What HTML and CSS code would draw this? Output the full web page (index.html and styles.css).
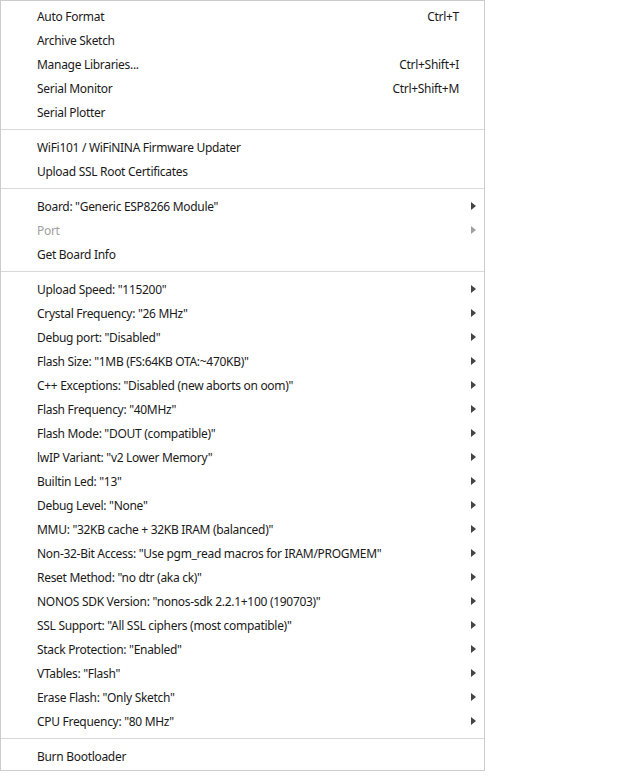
FILE: index.html
```html
<!DOCTYPE html>
<html>
<head>
<meta charset="utf-8">
<link rel="stylesheet" href="styles.css">
</head>
<body>
<div class="menu">
  <div class="item"><span class="label">Auto Format</span><span class="key">Ctrl+T</span></div>
  <div class="item"><span class="label">Archive Sketch</span></div>
  <div class="item"><span class="label">Manage Libraries...</span><span class="key">Ctrl+Shift+I</span></div>
  <div class="item"><span class="label">Serial Monitor</span><span class="key">Ctrl+Shift+M</span></div>
  <div class="item"><span class="label">Serial Plotter</span></div>
  <div class="sep"></div>
  <div class="item"><span class="label">WiFi101 / WiFiNINA Firmware Updater</span></div>
  <div class="item"><span class="label">Upload SSL Root Certificates</span></div>
  <div class="sep"></div>
  <div class="item sub"><span class="label">Board: "Generic ESP8266 Module"</span></div>
  <div class="item sub disabled"><span class="label">Port</span></div>
  <div class="item"><span class="label">Get Board Info</span></div>
  <div class="sep"></div>
  <div class="item sub"><span class="label">Upload Speed: "115200"</span></div>
  <div class="item sub"><span class="label">Crystal Frequency: "26 MHz"</span></div>
  <div class="item sub"><span class="label">Debug port: "Disabled"</span></div>
  <div class="item sub"><span class="label">Flash Size: "1MB (FS:64KB OTA:~470KB)"</span></div>
  <div class="item sub"><span class="label">C++ Exceptions: "Disabled (new aborts on oom)"</span></div>
  <div class="item sub"><span class="label">Flash Frequency: "40MHz"</span></div>
  <div class="item sub"><span class="label">Flash Mode: "DOUT (compatible)"</span></div>
  <div class="item sub"><span class="label">lwIP Variant: "v2 Lower Memory"</span></div>
  <div class="item sub"><span class="label">Builtin Led: "13"</span></div>
  <div class="item sub"><span class="label">Debug Level: "None"</span></div>
  <div class="item sub"><span class="label">MMU: "32KB cache + 32KB IRAM (balanced)"</span></div>
  <div class="item sub"><span class="label">Non-32-Bit Access: "Use pgm_read macros for IRAM/PROGMEM"</span></div>
  <div class="item sub"><span class="label">Reset Method: "no dtr (aka ck)"</span></div>
  <div class="item sub"><span class="label">NONOS SDK Version: "nonos-sdk 2.2.1+100 (190703)"</span></div>
  <div class="item sub"><span class="label">SSL Support: "All SSL ciphers (most compatible)"</span></div>
  <div class="item sub"><span class="label">Stack Protection: "Enabled"</span></div>
  <div class="item sub"><span class="label">VTables: "Flash"</span></div>
  <div class="item sub"><span class="label">Erase Flash: "Only Sketch"</span></div>
  <div class="item sub"><span class="label">CPU Frequency: "80 MHz"</span></div>
  <div class="sep"></div>
  <div class="item"><span class="label">Burn Bootloader</span></div>
</div>
</body>
</html>
```
FILE: styles.css
```css
html, body {
  margin: 0;
  padding: 0;
  background: #ffffff;
}
.menu {
  box-sizing: border-box;
  width: 485px;
  border: 1px solid #cccccc;
  padding: 3px 0 2px 0;
  font-family: "Noto Sans", "Open Sans", sans-serif;
  font-size: 12px;
  letter-spacing: -0.3px;
  color: #1a1a1a;
  background: #ffffff;
}
.item {
  display: flex;
  align-items: center;
  height: 24px;
  padding-left: 36px;
  padding-right: 25px;
  position: relative;
}
.label {
  flex: 1;
  white-space: nowrap;
}
.key {
  white-space: nowrap;
}
.sub::after {
  content: "";
  position: absolute;
  left: 470px;
  top: 8px;
  width: 0;
  height: 0;
  border-top: 4px solid transparent;
  border-bottom: 4px solid transparent;
  border-left: 5px solid #444444;
}
.disabled {
  color: #a0a0a0;
}
.disabled::after {
  border-left-color: #a0a0a0;
}
.sep {
  height: 1px;
  background: #d9d9d9;
  margin: 5px 0 5px 0;
}
```
